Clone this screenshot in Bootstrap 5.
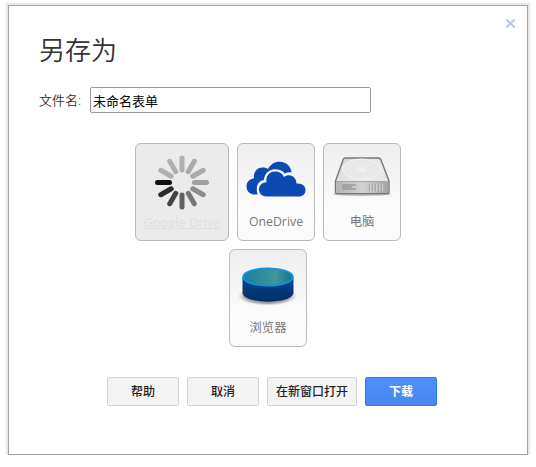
<!DOCTYPE html>
<html lang="zh-CN">
<head>
<meta charset="utf-8">
<meta name="viewport" content="width=device-width, initial-scale=1">
<title>另存为</title>
<link rel="stylesheet" href="https://cdn.jsdelivr.net/npm/bootstrap@5.3.0/dist/css/bootstrap.min.css">
<style>
body { font-family: "Open Sans", "Noto Sans CJK SC", sans-serif; font-size: 13px; background: #fff; color: #333; overflow: hidden; }
.save-dialog { width: 520px; height: 450px; margin: 5px 0 0 8px; padding: 28px 30px 0; border: 1px solid #a3a3a3; background: #fff; box-shadow: 0 0 0 2px #e9e9e9, 0 0 2px 2px #eee; }
.dialog-close { right: 11px; top: 12px; width: 11px; height: 11px; }
.dialog-title { font-size: 26px; line-height: 32px; font-weight: 350; color: #333; }
.name-row { height: 26px; margin-top: 21px; }
.name-label { width: 51px; padding-top: 2px; font-weight: 350; color: #333; }
.name-input { width: 281px; height: 26px; padding: 1px 2px; border: 1px solid #999; border-radius: 2px; font-size: 13px; line-height: 20px; color: #000; }
.tiles { width: 282px; gap: 8px; margin: 30px 0 0 88px; }
.tile { width: 78px; height: 98px; padding: 0; border: 1px solid #b9b9b9; border-radius: 6px; background: linear-gradient(#eee, #fcfcfc 70%, #fafafa); color: #777; font-size: 12.3px; line-height: 18px; }
.tile svg { height: 68px; width: 76px; margin-bottom: 1px; }
.tile-loading { width: 94px; background: #ebebeb; color: #dedede; font-size: 12.8px; }
.actions { gap: 8px; margin: 30px 0 0 68px; }
.action { width: 72px; height: 29px; padding: 0; border: 1px solid #d3d3d3; border-radius: 2px; background: #f4f4f4; color: #222; font-size: 12px; line-height: 26px; font-weight: 500; }
.action-wide { width: 90px; }
.action-main { background: linear-gradient(#4d90fe, #4787ed); border-color: #3079ed; color: #fff; font-weight: 700; }
</style>
</head>
<body>
<main class="save-dialog position-relative">
  <button class="dialog-close btn p-0 border-0 position-absolute d-flex" aria-label="关闭"><svg width="11" height="11" viewBox="0 0 11 11"><path d="M1.500 1.500l8 8M9.500 1.500l-8 8" stroke="#b3c7df" stroke-width="1.800"/></svg></button>
  <h1 class="dialog-title m-0">另存为</h1>
  <div class="name-row d-flex align-items-center">
    <label class="name-label" for="fname">文件名:</label>
    <input class="name-input" id="fname" type="text" value="未命名表单">
  </div>
  <div class="tiles d-flex flex-wrap justify-content-center mb-0">
    <button class="tile tile-loading btn d-flex flex-column align-items-center">
      <svg viewBox="0 0 76 68"><g transform="translate(38 38.5)" stroke-width="5" stroke-linecap="round">
        <path d="M-12.5 0H-24.5" stroke="#111"/>
        <path d="M-12.5 0H-24.5" stroke="#b0b0b0" transform="rotate(30)"/>
        <path d="M-12.5 0H-24.5" stroke="#b0b0b0" transform="rotate(60)"/>
        <path d="M-12.5 0H-24.5" stroke="#b0b0b0" transform="rotate(90)"/>
        <path d="M-12.5 0H-24.5" stroke="#aaa" transform="rotate(120)"/>
        <path d="M-12.5 0H-24.5" stroke="#aaa" transform="rotate(150)"/>
        <path d="M-12.5 0H-24.5" stroke="#a0a0a0" transform="rotate(180)"/>
        <path d="M-12.5 0H-24.5" stroke="#8c8c8c" transform="rotate(210)"/>
        <path d="M-12.5 0H-24.5" stroke="#767676" transform="rotate(240)"/>
        <path d="M-12.5 0H-24.5" stroke="#606060" transform="rotate(270)"/>
        <path d="M-12.5 0H-24.5" stroke="#444" transform="rotate(300)"/>
        <path d="M-12.5 0H-24.5" stroke="#2b2b2b" transform="rotate(330)"/>
      </g></svg>
      <span class="text-decoration-underline">Google Drive</span>
    </button>
    <button class="tile btn d-flex flex-column align-items-center">
      <svg viewBox="0 0 76 68"><path fill="#0a4ab2" d="M19.500 50.500H16C11 50 8.500 46.500 8.500 42.500C8.500 38 11.500 35 16 34.200C15 28 19.500 23 25 23.500C27 23.500 28.500 24 30 25C32.500 20 37 17.500 42 17.700C48 18 53 22 53.500 28.500C51 28 49 28.500 47 29.500C43.500 26 39 24.700 34 25.700C29 27 26.200 31 26 36C21.500 36.500 19 40 18.800 44C18.800 46.500 19 48.500 19.500 50.500Z"/><path fill="#0a4ab2" d="M28 52.500C23.500 52 21 49 21 45.500C21 41.500 24 38.500 28.500 38.300C27.500 32.500 31 28 36.500 27.500C41 27 44.500 29.500 46 33C51 29 58.500 32.500 58.500 39.500C64 39 67.500 42 67.500 46C67.500 50 65 52.500 60.500 52.500Z"/></svg>
      <span>OneDrive</span>
    </button>
    <button class="tile btn d-flex flex-column align-items-center">
      <svg viewBox="0 0 76 68"><defs><linearGradient id="top" x2="1" y2="1"><stop stop-color="#d5d5d5"/><stop offset=".6" stop-color="#ececec"/><stop offset="1" stop-color="#d8d8d8"/></linearGradient><linearGradient id="front" x2="1"><stop stop-color="#b4b4b4"/><stop offset=".5" stop-color="#d2d2d2"/><stop offset="1" stop-color="#a4a4a4"/></linearGradient></defs>
        <ellipse cx="38" cy="50" rx="29" ry="2" fill="#bbb"/>
        <path d="M21 14H54.500Q56 14 57 16L65 37V47.500Q65 49.500 63 49.500H13Q11.500 49.500 11.500 48V37L19 16Q19.500 14 21 14Z" fill="url(#top)" stroke="#757575" stroke-width="1.400"/>
        <path d="M12.200 38H64.300V47.500Q64.300 49 63 49H13.500Q12.200 49 12.200 47.500Z" fill="url(#front)"/>
        <path d="M12 37.500H64.500" stroke="#a5a5a5"/>
        <ellipse cx="37.500" cy="25" rx="19" ry="10" fill="#e8e8e8" stroke="#f5f5f5"/><ellipse cx="37.500" cy="25.500" rx="5" ry="2.500" fill="#f0f0f0"/>
        <path d="M18 41H32M18 43H28M18 45H32" stroke="#888"/><path d="M45.500 40V47M48.500 40V47M51.500 40V47M54.500 40V47M57.500 40V47" stroke="#a5a5a5"/><path d="M46.500 40V47M49.500 40V47M52.500 40V47M55.500 40V47M58.500 40V47" stroke="#ddd" stroke-width=".7"/></svg>
      <span>电脑</span>
    </button>
    <button class="tile btn d-flex flex-column align-items-center">
      <svg viewBox="0 0 76 68"><defs><linearGradient id="side" x2="0" y2="1"><stop stop-color="#064f9c"/><stop offset=".5" stop-color="#033a78"/><stop offset="1" stop-color="#022e64"/></linearGradient><linearGradient id="hole" x2="1"><stop stop-color="#197e9c"/><stop offset=".65" stop-color="#409899"/><stop offset="1" stop-color="#16708c"/></linearGradient><radialGradient id="shade"><stop stop-color="#555"/><stop offset=".75" stop-color="#aaa"/><stop offset="1" stop-color="#eee" stop-opacity="0"/></radialGradient></defs>
        <ellipse cx="37.500" cy="46" rx="31" ry="10" fill="url(#shade)"/>
        <path d="M12.500 27V43C14 54.500 62 54.500 63.500 43V27Z" fill="url(#side)"/><ellipse cx="38" cy="27" rx="24.800" ry="8.600" fill="url(#hole)" stroke="#0996e2" stroke-width="1.800"/></svg>
      <span>浏览器</span>
    </button>
  </div>
  <div class="actions d-flex">
    <button class="action btn">帮助</button>
    <button class="action btn">取消</button>
    <button class="action action-wide btn">在新窗口打开</button>
    <button class="action action-main btn">下载</button>
  </div>
</main>
<script src="https://cdn.jsdelivr.net/npm/bootstrap@5.3.0/dist/js/bootstrap.bundle.min.js"></script>
</body>
</html>
